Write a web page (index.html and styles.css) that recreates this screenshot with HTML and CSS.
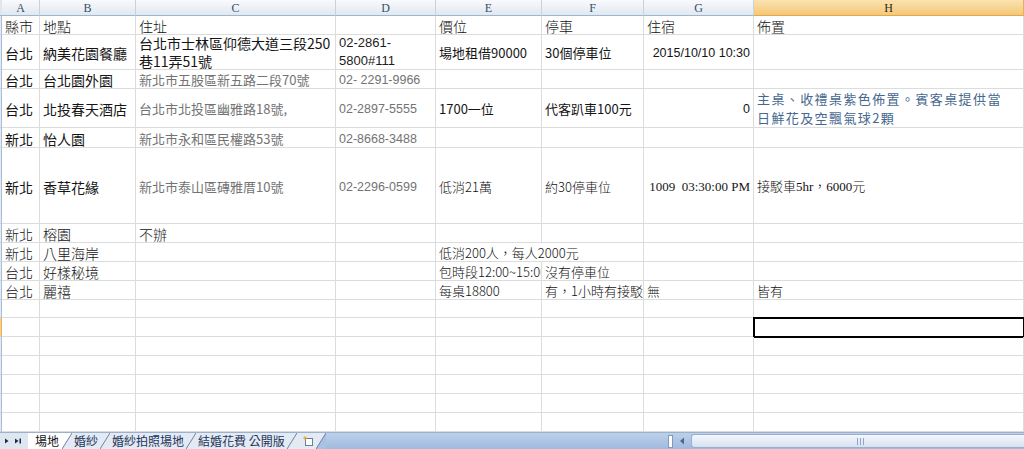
FILE: index.html
```html
<!DOCTYPE html>
<html lang="zh-Hant">
<head>
<meta charset="utf-8">
<title>場地</title>
<link rel="stylesheet" href="styles.css">
</head>
<body>
<div class="sheet">
  <div class="corner"></div>
  <div class="h">A</div><div class="h">B</div><div class="h">C</div><div class="h">D</div><div class="h">E</div><div class="h">F</div><div class="h">G</div><div class="h on">H</div>

  <div class="rh"></div>
  <div class="c a t">縣市</div><div class="c a t">地點</div><div class="c a t">住址</div><div class="c"></div><div class="c a t">價位</div><div class="c a t">停車</div><div class="c a t">住宿</div><div class="c a t">佈置</div>

  <div class="rh"></div>
  <div class="c a">台北</div><div class="c a">納美花園餐廳</div><div class="c a ml"><span class="lines">台北市士林區仰德大道三段250<br>巷11弄51號</span></div><div class="c num dk ml"><span class="lines">02-2861-<br>5800#111</span></div><div class="c">場地租借90000</div><div class="c">30個停車位</div><div class="c num r">2015/10/10 10:30</div><div class="c"></div>

  <div class="rh"></div>
  <div class="c a">台北</div><div class="c a">台北園外園</div><div class="c g">新北市五股區新五路二段70號</div><div class="c num g">02- 2291-9966</div><div class="c"></div><div class="c"></div><div class="c"></div><div class="c"></div>

  <div class="rh"></div>
  <div class="c a">台北</div><div class="c a">北投春天酒店</div><div class="c g">台北市北投區幽雅路18號,</div><div class="c num g">02-2897-5555</div><div class="c">1700一位</div><div class="c">代客趴車100元</div><div class="c num r">0</div><div class="c blue ml"><span class="lines">主桌、收禮桌紫色佈置。賓客桌提供當<br>日鮮花及空飄氣球2顆</span></div>

  <div class="rh"></div>
  <div class="c a">新北</div><div class="c a">怡人園</div><div class="c g">新北市永和區民權路53號</div><div class="c num g">02-8668-3488</div><div class="c"></div><div class="c"></div><div class="c"></div><div class="c"></div>

  <div class="rh"></div>
  <div class="c a">新北</div><div class="c a">香草花緣</div><div class="c g">新北市泰山區磚雅厝10號</div><div class="c num g">02-2296-0599</div><div class="c t">低消21萬</div><div class="c t">約30停車位</div><div class="c ser r">1009&nbsp;&nbsp;03:30:00 PM</div><div class="c t mix">接駁車5hr，6000元</div>

  <div class="rh"></div>
  <div class="c a t">新北</div><div class="c a t">榕園</div><div class="c a t">不辦</div><div class="c"></div><div class="c"></div><div class="c"></div><div class="c"></div><div class="c"></div>

  <div class="rh"></div>
  <div class="c a t">新北</div><div class="c a t">八里海岸</div><div class="c"></div><div class="c"></div><div class="c t ov">低消200人，每人2000元</div><div class="c"></div><div class="c"></div><div class="c"></div>

  <div class="rh"></div>
  <div class="c a t">台北</div><div class="c a t">好樣秘境</div><div class="c"></div><div class="c"></div><div class="c t">包時段12:00~15:00</div><div class="c t">沒有停車位</div><div class="c"></div><div class="c"></div>

  <div class="rh"></div>
  <div class="c a t">台北</div><div class="c a t">麗禧</div><div class="c"></div><div class="c"></div><div class="c t">每桌18800</div><div class="c t">有，1小時有接駁車</div><div class="c t">無</div><div class="c t">皆有</div>

  <div class="rh"></div>
  <div class="c"></div><div class="c"></div><div class="c"></div><div class="c"></div><div class="c"></div><div class="c"></div><div class="c"></div><div class="c"></div>

  <div class="rh on"></div>
  <div class="c"></div><div class="c"></div><div class="c"></div><div class="c"></div><div class="c"></div><div class="c"></div><div class="c"></div><div class="c active"></div>

  <div class="rh"></div>
  <div class="c"></div><div class="c"></div><div class="c"></div><div class="c"></div><div class="c"></div><div class="c"></div><div class="c"></div><div class="c"></div>

  <div class="rh"></div>
  <div class="c"></div><div class="c"></div><div class="c"></div><div class="c"></div><div class="c"></div><div class="c"></div><div class="c"></div><div class="c"></div>

  <div class="rh"></div>
  <div class="c"></div><div class="c"></div><div class="c"></div><div class="c"></div><div class="c"></div><div class="c"></div><div class="c"></div><div class="c"></div>

  <div class="rh"></div>
  <div class="c"></div><div class="c"></div><div class="c"></div><div class="c"></div><div class="c"></div><div class="c"></div><div class="c"></div><div class="c"></div>

  <div class="rh"></div>
  <div class="c"></div><div class="c"></div><div class="c"></div><div class="c"></div><div class="c"></div><div class="c"></div><div class="c"></div><div class="c"></div>
</div>

<div class="tabbar">
  <div class="nav">
    <svg width="28" height="16" viewBox="0 0 28 16"><path d="M5 5.5 L8.5 8 L5 10.5 Z" fill="#1b2d4c"/><path d="M15 5.5 L18.5 8 L15 10.5 Z" fill="#1b2d4c"/><rect x="19.5" y="5.5" width="1.5" height="5" fill="#1b2d4c"/></svg>
  </div>
  <div class="tab act">場地</div>
  <svg class="sep" width="10" height="16" viewBox="0 0 10 16"><polygon points="0,0 10,0 0,16" fill="#ffffff"/><polygon points="10,0 10,16 0,16" fill="#e3eaf4"/><line x1="0" y1="16" x2="10" y2="0" stroke="#6f83a3" stroke-width="1"/></svg>
  <div class="tab">婚紗</div>
  <svg class="sep" width="10" height="16" viewBox="0 0 10 16"><rect width="10" height="16" fill="#e3eaf4"/><line x1="0" y1="16" x2="10" y2="0" stroke="#6f83a3" stroke-width="1"/></svg>
  <div class="tab">婚紗拍照場地</div>
  <svg class="sep" width="10" height="16" viewBox="0 0 10 16"><rect width="10" height="16" fill="#e3eaf4"/><line x1="0" y1="16" x2="10" y2="0" stroke="#6f83a3" stroke-width="1"/></svg>
  <div class="tab">結婚花費 公開版</div>
  <svg class="sep" width="10" height="16" viewBox="0 0 10 16"><rect width="10" height="16" fill="#e3eaf4"/><line x1="0" y1="16" x2="10" y2="0" stroke="#6f83a3" stroke-width="1"/></svg>
  <div class="tab ico">
    <svg width="12" height="12" viewBox="0 0 12 12"><rect x="3.5" y="3.5" width="7" height="7" fill="#fff" stroke="#6b7f9c"/><path d="M3 0.5 L3.7 2.3 L5.5 3 L3.7 3.7 L3 5.5 L2.3 3.7 L0.5 3 L2.3 2.3 Z" fill="#e8b020"/></svg>
  </div>
  <svg class="sep" width="10" height="16" viewBox="0 0 10 16"><polygon points="0,0 10,0 0,16" fill="#e3eaf4"/><polygon points="10,0 10,16 0,16" fill="#a9c1e2"/><line x1="0" y1="16" x2="10" y2="0" stroke="#6f83a3" stroke-width="1"/></svg>
  <div class="fill"></div>
  <div class="hscroll">
    <div class="split"></div>
    <div class="arrow"><svg width="16" height="14" viewBox="0 0 16 14"><path d="M10 3.5 L6 7 L10 10.5 Z" fill="#4d6a92"/></svg></div>
    <div class="thumb"><svg width="8" height="7" viewBox="0 0 8 7"><rect x="0" width="1" height="7" fill="#8ea5c5"/><rect x="3" width="1" height="7" fill="#8ea5c5"/><rect x="6" width="1" height="7" fill="#8ea5c5"/></svg></div>
  </div>
</div>
</body>
</html>
```

FILE: styles.css
```css
* { box-sizing: border-box; margin: 0; padding: 0; }
html, body { width: 1024px; height: 449px; overflow: hidden; background: #fff; }
body {
  font-family: "Noto Sans CJK TC", "Noto Sans", sans-serif;
  color: #151515;
  display: flex;
  flex-direction: column;
}

.sheet {
  display: grid;
  grid-template-columns: 2px 38px 96px 200px 100px 106px 102px 110px 270px;
  grid-template-rows: 16px 19px 35px 19px 39px 20px 76px 19px 19px 19px 19px 18px 19px 19px 19px 19px 19px 19px;
  height: 432px;
  width: 1024px;
  overflow: hidden;
}

.corner { background: #dfe6f0; border-bottom: 1px solid #9eb6ce; }
.h {
  background: linear-gradient(#f8fafc, #e2e8f1);
  border-right: 1px solid #c9d3e0;
  border-bottom: 1px solid #9eb6ce;
  display: flex;
  align-items: center;
  justify-content: center;
  font: 12px/14px "Liberation Serif", serif;
  color: #3b4d66;
}
.h.on {
  background: linear-gradient(#fbe2b0, #f4c877);
  border-right-color: #e2b25c;
  border-bottom-color: #e2a84a;
  color: #2d2a22;
}

.rh { background: #e3eaf4; border-right: 1px solid #a8bcd5; border-bottom: 1px solid #c8d3e2; }
.rh.on { background: #f7d18b; border-right-color: #e2b25c; }

.c {
  border-right: 1px solid #dadcdd;
  border-bottom: 1px solid #dadcdd;
  display: flex;
  align-items: center;
  padding: 2px 3px 0;
  white-space: nowrap;
  overflow: hidden;
  font-size: 13px;
  line-height: 18px;
}
.c.a { font-size: 14px; }
.c.t { font-weight: 300; color: #111; }
.c.g { color: #737373; }
.c.num { font-family: "Liberation Sans", sans-serif; font-size: 12.5px; }
.c.dk { color: #1d1d1d; font-size: 13px; }
.c.r { justify-content: flex-end; }
.c.ser { font-family: "Liberation Serif", serif; font-size: 13px; }
.c.mix { font-family: "Liberation Serif", "Noto Sans CJK TC", serif; }
.c.blue { color: #46688f; letter-spacing: 1.4px; font-size: 13px; }
.c.ml { padding-top: 0; overflow: visible; }
.lines { display: block; line-height: 18px; }
.c.blue .lines { line-height: 19px; }
.c.ov { overflow: visible; border-right-color: transparent; }
.c.active { outline: 2px solid #000; outline-offset: -1px; }

.tabbar {
  height: 17px;
  display: flex;
  border-top: 1px solid #9cb1ce;
  background: linear-gradient(#bcd0ea, #a0badf);
}
.nav { width: 28px; background: #dfe6ef; display: flex; }
.tab {
  display: flex;
  align-items: center;
  padding: 0 2px;
  font-size: 12px;
  line-height: 16px;
  color: #1e3458;
  background: #e3eaf4;
  white-space: nowrap;
}
.tab.act { background: #fff; color: #111; padding: 0 3px 0 7px; }
.tab.ico { padding: 0 2px 0 5px; }
.sep { display: block; flex: none; }
.fill { flex: 1; }
.hscroll { width: 356px; display: flex; align-items: center; padding: 1px 0; }
.split { width: 5px; height: 13px; margin-right: 1px; background: #fff; border: 1px solid #8399b8; }
.arrow { width: 16px; height: 14px; display: flex; }
.thumb {
  flex: 1;
  height: 14px;
  margin-left: 1px;
  border: 1px solid #98afd0;
  border-right: none;
  border-radius: 3px 0 0 3px;
  background: linear-gradient(#f5f8fc, #d6e1f0);
  display: flex;
  align-items: center;
  padding-left: 165px;
}
```
